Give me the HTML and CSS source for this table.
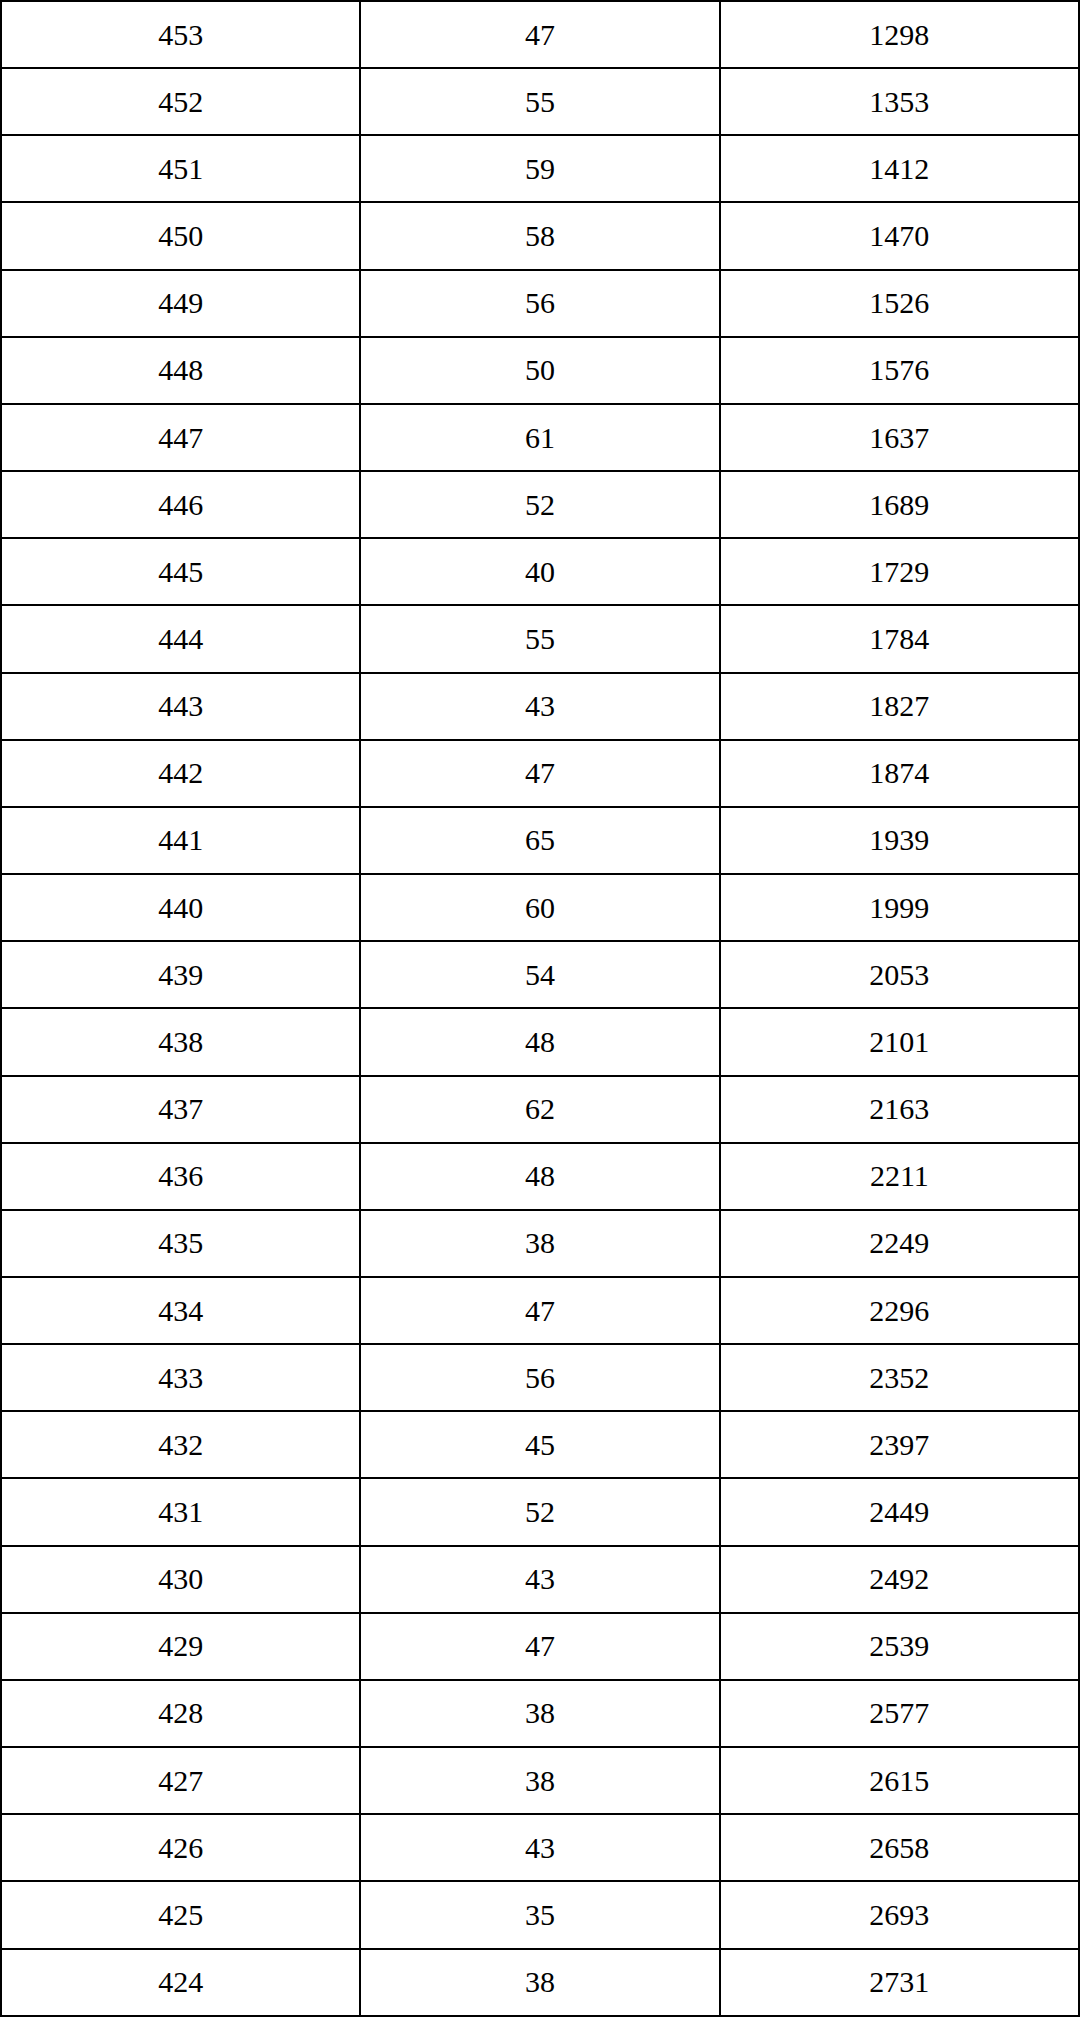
FILE: index.html
```html
<!DOCTYPE html>
<html>
<head>
<meta charset="utf-8">
<link rel="stylesheet" href="styles.css">
</head>
<body>
<table class="grid">
<tbody>
<tr><td>453</td><td>47</td><td>1298</td></tr>
<tr><td>452</td><td>55</td><td>1353</td></tr>
<tr><td>451</td><td>59</td><td>1412</td></tr>
<tr><td>450</td><td>58</td><td>1470</td></tr>
<tr><td>449</td><td>56</td><td>1526</td></tr>
<tr><td>448</td><td>50</td><td>1576</td></tr>
<tr><td>447</td><td>61</td><td>1637</td></tr>
<tr><td>446</td><td>52</td><td>1689</td></tr>
<tr><td>445</td><td>40</td><td>1729</td></tr>
<tr><td>444</td><td>55</td><td>1784</td></tr>
<tr><td>443</td><td>43</td><td>1827</td></tr>
<tr><td>442</td><td>47</td><td>1874</td></tr>
<tr><td>441</td><td>65</td><td>1939</td></tr>
<tr><td>440</td><td>60</td><td>1999</td></tr>
<tr><td>439</td><td>54</td><td>2053</td></tr>
<tr><td>438</td><td>48</td><td>2101</td></tr>
<tr><td>437</td><td>62</td><td>2163</td></tr>
<tr><td>436</td><td>48</td><td>2211</td></tr>
<tr><td>435</td><td>38</td><td>2249</td></tr>
<tr><td>434</td><td>47</td><td>2296</td></tr>
<tr><td>433</td><td>56</td><td>2352</td></tr>
<tr><td>432</td><td>45</td><td>2397</td></tr>
<tr><td>431</td><td>52</td><td>2449</td></tr>
<tr><td>430</td><td>43</td><td>2492</td></tr>
<tr><td>429</td><td>47</td><td>2539</td></tr>
<tr><td>428</td><td>38</td><td>2577</td></tr>
<tr><td>427</td><td>38</td><td>2615</td></tr>
<tr><td>426</td><td>43</td><td>2658</td></tr>
<tr><td>425</td><td>35</td><td>2693</td></tr>
<tr><td>424</td><td>38</td><td>2731</td></tr>
</tbody>
</table>
</body>
</html>
```
FILE: styles.css
```css
html, body {
  margin: 0;
  padding: 0;
  background: #ffffff;
}
.grid {
  width: 1080px;
  height: 2017px;
  border-collapse: collapse;
  table-layout: fixed;
  font-family: "Liberation Serif", "Times New Roman", serif;
  font-size: 30px;
  line-height: 1;
  color: #000000;
}
.grid td {
  border: 2px solid #000000;
  text-align: center;
  vertical-align: middle;
  padding: 0;
  width: 33.333%;
  height: 60px;
}
```
